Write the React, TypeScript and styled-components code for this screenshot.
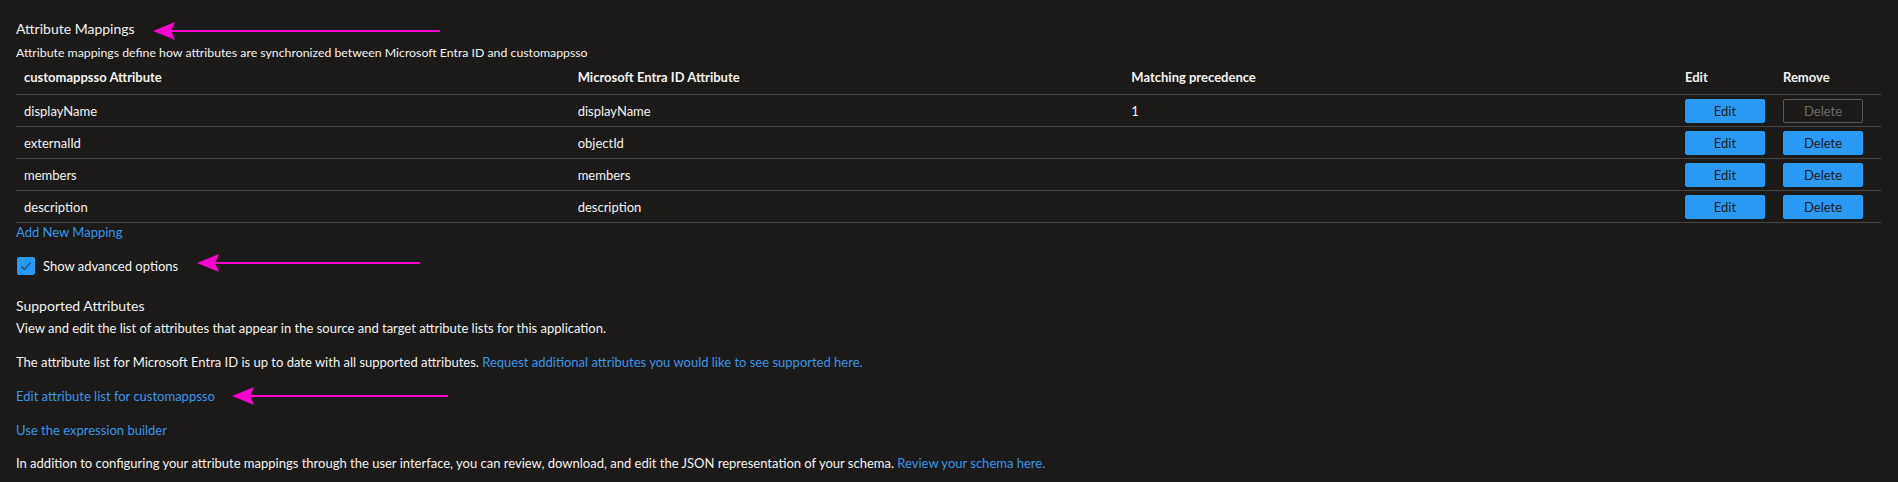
import React from 'react';
import styled, { createGlobalStyle } from 'styled-components';

const GlobalStyle = createGlobalStyle`
  body {
    margin: 0;
    background: #1b1a19;
    color: #f3f2f1;
    font-family: Lato, "Liberation Sans", sans-serif;
    font-size: 13px;
  }
`;

const Page = styled.div`
  padding: 19px 17px 0 16px;
`;

const SectionTitle = styled.div<{ $gap?: number }>`
  position: relative;
  font-size: 14px;
  line-height: 20px;
  margin-top: ${(p) => p.$gap ?? 0}px;
`;

const Text = styled.div<{ $gap?: number; $small?: boolean }>`
  position: relative;
  line-height: 18px;
  font-size: ${(p) => (p.$small ? '12.3px' : '13px')};
  margin-top: ${(p) => p.$gap ?? 0}px;
`;

const Link = styled.a`
  color: #3a96e6;
  text-decoration: none;
  cursor: pointer;
`;

const Table = styled.div`
  display: grid;
  grid-template-columns: 1fr 1fr 1fr 98px 106px;
`;

const HeaderCell = styled.div`
  display: flex;
  align-items: center;
  height: 33px;
  padding: 0 8px 2px;
  box-sizing: border-box;
  font-weight: 700;
  border-bottom: 1px solid #484644;
`;

const Cell = styled.div`
  display: flex;
  align-items: center;
  height: 32px;
  padding: 0 8px;
  box-sizing: border-box;
  border-bottom: 1px solid #484644;
`;

const Button = styled.button<{ $disabled?: boolean }>`
  width: 80px;
  height: 24px;
  margin-top: 1px;
  border-radius: 2px;
  font-family: inherit;
  font-size: 13px;
  cursor: ${(p) => (p.$disabled ? 'default' : 'pointer')};
  background: ${(p) => (p.$disabled ? 'transparent' : '#2899f5')};
  border: 1px solid ${(p) => (p.$disabled ? '#5a5856' : '#2899f5')};
  color: ${(p) => (p.$disabled ? '#6e6c6a' : '#1b1a19')};
`;

const CheckRow = styled.label`
  position: relative;
  display: flex;
  align-items: center;
  gap: 8px;
  height: 18px;
  margin-top: 16px;
  padding-left: 1px;
  cursor: pointer;
`;

const Box = styled.span`
  display: flex;
  align-items: center;
  justify-content: center;
  width: 18px;
  height: 18px;
  border-radius: 2px;
  background: #2899f5;
`;

const ArrowWrap = styled.svg<{ $left: number; $top: number }>`
  position: absolute;
  left: ${(p) => p.$left}px;
  top: ${(p) => p.$top}px;
  overflow: visible;
`;

function Arrow({ left, top, width }: { left: number; top: number; width: number }) {
  return (
    <ArrowWrap $left={left} $top={top} width={width} height={20} viewBox={`0 0 ${width} 20`}>
      <line x1={18} y1={10} x2={width} y2={10} stroke="#ff00cc" strokeWidth={2} />
      <polygon points="0,10 22,1 18,10 22,19" fill="#ff00cc" />
    </ArrowWrap>
  );
}

const rows = [
  { source: 'displayName', target: 'displayName', precedence: '1', locked: true },
  { source: 'externalId', target: 'objectId', precedence: '', locked: false },
  { source: 'members', target: 'members', precedence: '', locked: false },
  { source: 'description', target: 'description', precedence: '', locked: false },
];

export default function App() {
  return (
    <>
      <GlobalStyle />
      <Page>
        <SectionTitle>
          Attribute Mappings
          <Arrow left={137} top={2} width={287} />
        </SectionTitle>
        <Text $gap={5} $small>
          Attribute mappings define how attributes are synchronized between Microsoft Entra ID and customappsso
        </Text>

        <Table>
          <HeaderCell>customappsso Attribute</HeaderCell>
          <HeaderCell>Microsoft Entra ID Attribute</HeaderCell>
          <HeaderCell>Matching precedence</HeaderCell>
          <HeaderCell>Edit</HeaderCell>
          <HeaderCell>Remove</HeaderCell>
          {rows.map((r) => (
            <React.Fragment key={r.source}>
              <Cell>{r.source}</Cell>
              <Cell>{r.target}</Cell>
              <Cell>{r.precedence}</Cell>
              <Cell>
                <Button>Edit</Button>
              </Cell>
              <Cell>
                <Button $disabled={r.locked}>Delete</Button>
              </Cell>
            </React.Fragment>
          ))}
        </Table>

        <Text>
          <Link>Add New Mapping</Link>
        </Text>

        <CheckRow>
          <Box>
            <svg width="12" height="12" viewBox="0 0 12 12">
              <polyline points="1.5,6.5 4.5,9.5 10.5,2.5" fill="none" stroke="#1f3a5a" strokeWidth="1.1" />
            </svg>
          </Box>
          Show advanced options
          <Arrow left={181} top={-4} width={223} />
        </CheckRow>

        <SectionTitle $gap={21}>Supported Attributes</SectionTitle>
        <Text $gap={3}>
          View and edit the list of attributes that appear in the source and target attribute lists for this application.
        </Text>
        <Text $gap={16}>
          The attribute list for Microsoft Entra ID is up to date with all supported attributes.{' '}
          <Link>Request additional attributes you would like to see supported here.</Link>
        </Text>
        <Text $gap={16}>
          <Link>Edit attribute list for customappsso</Link>
          <Arrow left={216} top={-1} width={216} />
        </Text>
        <Text $gap={16}>
          <Link>Use the expression builder</Link>
        </Text>
        <Text $gap={15}>
          In addition to configuring your attribute mappings through the user interface, you can review, download, and
          edit the JSON representation of your schema. <Link>Review your schema here.</Link>
        </Text>
      </Page>
    </>
  );
}
